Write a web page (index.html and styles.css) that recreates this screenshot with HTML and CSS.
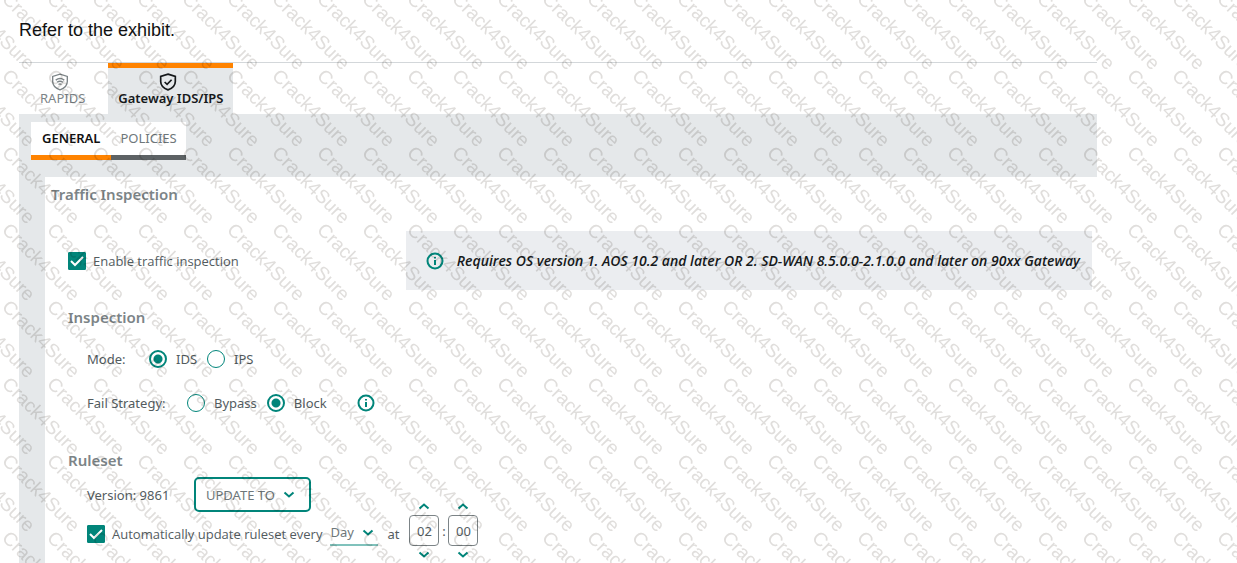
FILE: index.html
```html
<!DOCTYPE html>
<html lang="en">
<head>
<meta charset="utf-8">
<title>Gateway IDS/IPS</title>
<link rel="stylesheet" href="styles.css">
</head>
<body>
<main class="page">
  <p class="intro">Refer to the exhibit.</p>
  <section class="exhibit">
    <nav class="tabs">
      <button class="tab" type="button">
        <svg class="tab-icon" viewBox="0 0 16 16"><path d="M8 1 14.500 3v4.500c0 3.500-2.500 6-6.500 7.500C4 13.500 1.500 11 1.500 7.500V3z"/><path d="M4.200 6.300q3.800-2.800 7.600 0M5.400 8.300q2.600-2 5.200 0M6.700 10.200q1.300-1 2.600 0"/></svg>
        <span>RAPIDS</span>
      </button>
      <button class="tab tab-active" type="button">
        <svg class="tab-icon" viewBox="0 0 16 16"><path d="M8 1 14.500 3v4.500c0 3.500-2.500 6-6.500 7.500C4 13.500 1.500 11 1.500 7.500V3z"/><path d="m5 8 2.200 2.100L11.200 6"/></svg>
        <span>Gateway IDS/IPS</span>
      </button>
    </nav>
    <div class="subtabs">
      <button class="subtab subtab-active" type="button">GENERAL</button>
      <button class="subtab" type="button">POLICIES</button>
    </div>
    <div class="content">
      <h2 class="title">Traffic Inspection</h2>
      <div class="enable-row">
        <label class="check"><input class="checkbox" type="checkbox" checked><svg class="tick" viewBox="0 0 18 18"><path d="m3 9 4 4 8-8"/></svg>Enable traffic inspection</label>
        <div class="notice">
          <svg class="info" viewBox="0 0 18 18"><circle cx="9" cy="9" r="7.500"/><path d="M9 8v5M9 5v1.500"/></svg>
          <span>Requires OS version 1. AOS 10.2 and later OR 2. SD-WAN 8.5.0.0-2.1.0.0 and later on 90xx Gateway</span>
        </div>
      </div>
      <h3 class="heading heading-inspection">Inspection</h3>
      <div class="row mode" role="radiogroup" aria-labelledby="mode">
        <span class="mode-label" id="mode">Mode:</span>
        <label class="choice"><input class="radio" type="radio" name="mode" checked>IDS</label>
        <label class="choice"><input class="radio" type="radio" name="mode">IPS</label>
      </div>
      <div class="row strategy" role="radiogroup" aria-labelledby="strategy">
        <span class="strategy-label" id="strategy">Fail Strategy:</span>
        <label class="choice"><input class="radio" type="radio" name="strategy">Bypass</label>
        <label class="choice"><input class="radio" type="radio" name="strategy" checked>Block</label>
        <svg class="info info-strategy" viewBox="0 0 18 18"><circle cx="9" cy="9" r="7.500"/><path d="M9 8v5M9 5v1.500"/></svg>
      </div>
      <h3 class="heading heading-ruleset">Ruleset</h3>
      <div class="row version">
        <span class="version-label">Version: 9861</span>
        <button class="update" type="button">UPDATE TO <svg class="chevron" viewBox="0 0 12 8"><path d="m1.500 1.500 4.500 4 4.500-4"/></svg></button>
      </div>
      <div class="row schedule">
        <label class="check"><input class="checkbox" type="checkbox" checked><svg class="tick" viewBox="0 0 18 18"><path d="m3 9 4 4 8-8"/></svg>Automatically update ruleset every</label>
        <span class="picker">
          <select class="day" aria-label="Update interval"><option>Day</option><option>Week</option></select>
          <svg class="chevron picker-chevron" viewBox="0 0 12 8"><path d="m1.500 1.500 4.500 4 4.500-4"/></svg>
        </span>
        <span class="at">at</span>
        <div class="time">
          <div class="spinner">
            <button class="step" type="button" aria-label="Hour up"><svg class="chevron" viewBox="0 0 12 8"><path d="m1.500 6.500 4.500-4 4.500 4"/></svg></button>
            <input class="digits" type="text" value="02" aria-label="Hour">
            <button class="step" type="button" aria-label="Hour down"><svg class="chevron" viewBox="0 0 12 8"><path d="m1.500 1.500 4.500 4 4.500-4"/></svg></button>
          </div>
          <span class="colon">:</span>
          <div class="spinner">
            <button class="step" type="button" aria-label="Minute up"><svg class="chevron" viewBox="0 0 12 8"><path d="m1.500 6.500 4.500-4 4.500 4"/></svg></button>
            <input class="digits" type="text" value="00" aria-label="Minute">
            <button class="step" type="button" aria-label="Minute down"><svg class="chevron" viewBox="0 0 12 8"><path d="m1.500 1.500 4.500 4 4.500-4"/></svg></button>
          </div>
        </div>
      </div>
    </div>
  </section>
</main>
<svg class="watermark" id="watermark" aria-hidden="true"></svg>
<script src="watermark.js"></script>
</body>
</html>
```
FILE: styles.css
```css
* { box-sizing: border-box; }

body {
  margin: 0;
  background: #fff;
  color: #535c5f;
  font: 13px/20px "Noto Sans", "Open Sans", sans-serif;
  overflow: hidden;
}

button, input, select { font: inherit; color: inherit; margin: 0; }
button { cursor: pointer; border: 0; background: none; padding: 0; }
svg { display: block; flex: none; fill: none; stroke: currentColor; }

.page { padding: 18px 140px 0 19px; min-height: 100vh; display: flex; flex-direction: column; }
.intro { margin: 0 0 20px; color: #111; font: 18px/24px "Liberation Sans", Arial, sans-serif; }
.exhibit { flex: 1; display: flex; flex-direction: column; border-top: 1px solid #d3d7da; }

.tabs { display: flex; }
.tab {
  display: flex; flex-direction: column; align-items: center;
  padding: 10px 23px 9px 21px;
  color: #7c8487;
  line-height: 14px;
  border-top: 0 solid #ff8300;
}
.tab-active {
  padding: 5px 10px 9px;
  border-top-width: 5px;
  background: #e5e8ea;
  color: #16191b;
  font-weight: 600;
}
.tab-icon { width: 18px; height: 18px; margin-right: 5px; stroke-width: 1.2; }
.tab-active .tab-icon { stroke-width: 1.5; }

.subtabs { display: flex; background: #e5e8ea; padding: 8px 12px 17px; }
.subtab {
  background: #fff;
  border-bottom: 5px solid #5d6264;
  padding: 6px 9px 7px;
  color: #6e777a;
}
.subtab-active { border-color: #ff8300; color: #111; font-weight: 600; padding: 6px 11px 7px; }

.content { flex: 1; border-left: 26px solid #e5e8ea; padding-left: 6px; }
.title { margin: 7px 0 27px; font-size: 15px; font-weight: 600; line-height: 20px; color: #7c8487; }

.enable-row { display: flex; align-items: center; padding: 0 5px 0 17px; }
.check {
  display: flex; align-items: center; position: relative; gap: 7px;
  font-family: "Open Sans", "Noto Sans", sans-serif; white-space: nowrap;
}
.checkbox { appearance: none; width: 18px; height: 18px; border: 1px solid #01857a; border-radius: 1px; }
.checkbox:checked { background: #01857a; }
.tick { position: absolute; left: 0; width: 18px; height: 18px; stroke: #fff; stroke-width: 2; pointer-events: none; }
.schedule .tick { bottom: 1px; }
.notice {
  flex: 1; margin-left: 167px; min-height: 59px;
  display: flex; align-items: center; gap: 13px; padding: 0 0 0 20px;
  background: #ebedf0; color: #16191b;
  font-family: "Open Sans", "Noto Sans", sans-serif;
  font-size: 14px; font-weight: 600; font-style: italic; white-space: nowrap;
}
.info { width: 18px; height: 18px; color: #01857a; stroke-width: 2; }

.heading { margin: 0 0 0 17px; font-size: 15px; font-weight: 600; line-height: 24px; color: #7c8487; }
.heading-inspection { padding: 15px 0 17px; }
.heading-ruleset { padding: 32px 0 5px; }

.row { display: flex; align-items: center; padding-left: 36px; white-space: nowrap; }
.mode, .strategy { min-height: 26px; }
.strategy { margin-top: 18px; }
.mode-label { width: 62px; }
.strategy-label { width: 100px; }
.choice { display: flex; align-items: center; gap: 9px; margin-right: 10px; }
.radio {
  appearance: none; width: 18px; height: 18px; flex: none;
  border: 1px solid #01857a; border-radius: 50%; background: #fff;
}
.radio:checked { border-width: 2px; background: radial-gradient(circle, #01857a 4px, #fff 5px); }
.info-strategy { margin-left: 20px; }

.version-label { width: 107px; }
.update {
  display: flex; align-items: center; gap: 8px;
  min-height: 35px; padding: 0 14px 0 10px;
  border: 2px solid #01857a; border-radius: 5px; color: #6e777a;
}
.chevron { width: 12px; height: 8px; color: #01857a; stroke-width: 2; }

.schedule { margin-top: -10px; }
.schedule > .check { padding-top: 6px; }
.picker { position: relative; margin: 4px 9px 0 8px; }
.day {
  appearance: none; display: block; width: 48px; height: 26px; padding: 0;
  border: 0; border-bottom: 2px solid #80c2bc; border-radius: 0;
  background: none; color: #6e777a;
}
.picker-chevron { position: absolute; right: 4px; top: 9px; pointer-events: none; }
.at { padding-top: 6px; }
.time { display: flex; align-items: center; margin-left: 10px; }
.spinner { display: flex; flex-direction: column; align-items: center; gap: 5px; }
.step { height: 8px; }
.digits {
  width: 30px; height: 31px; padding: 0; text-align: center;
  border: 1px solid #7c8487; border-radius: 4px; background: #fff;
}
.colon { width: 9px; text-align: center; }

.watermark {
  position: fixed; inset: 0; width: 100%; height: 100%;
  pointer-events: none; mix-blend-mode: multiply;
  fill: #e0dedc; stroke: none;
  font: 19px "Liberation Sans", Arial, sans-serif;
}
```
FILE: watermark.js
```js
// Tiles the diagonal label across the whole window.
const layer = document.getElementById("watermark");
const stepX = 45;
const stepY = 77;

function drawWatermark() {
  layer.replaceChildren();
  for (let y = -stepY; y < innerHeight; y += stepY) {
    for (let x = 1 - stepX; x < innerWidth; x += stepX) {
      const label = document.createElementNS("http://www.w3.org/2000/svg", "text");
      label.setAttribute("transform", `translate(${x} ${y}) rotate(45)`);
      label.textContent = "Crack4Sure";
      layer.append(label);
    }
  }
}

drawWatermark();
addEventListener("resize", drawWatermark);
```
